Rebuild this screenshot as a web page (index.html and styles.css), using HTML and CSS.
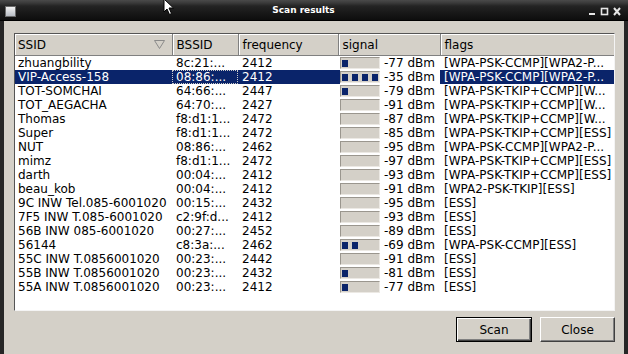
FILE: index.html
```html
<!DOCTYPE html>
<html lang="en">
<head>
    <meta charset="UTF-8">
    <title>Scan results</title>
    <link rel="stylesheet" href="styles.css">
</head>
<body>
    <div class="window">
        <div class="titlebar">
            <div class="win-icon"></div>
            <div class="title">Scan results</div>
            <div class="controls">
                <svg width="34" height="9" viewBox="0 0 34 9">
                    <rect x="1" y="6" width="6" height="2" fill="#e6e6e6"/>
                    <rect x="13.5" y="1.5" width="6" height="6" fill="none" stroke="#e6e6e6" stroke-width="1.6"/>
                    <path d="M26 1 L32 8 M32 1 L26 8" stroke="#e6e6e6" stroke-width="2"/>
                </svg>
            </div>
        </div>

        <div class="client">
            <div class="listbox">
                <table class="scan-table">
                    <colgroup>
                        <col class="c-ssid">
                        <col class="c-bssid">
                        <col class="c-freq">
                        <col class="c-signal">
                        <col class="c-flags">
                    </colgroup>
                    <thead>
                        <tr>
                            <th><div class="sort-head">SSID
                                <svg width="11" height="9" viewBox="0 0 11 9"><path d="M0.5 0.5 H10.5 L5.5 8.5 Z" fill="none" stroke="#8a8a8a"/></svg>
                            </div></th>
                            <th>BSSID</th>
                            <th>frequency</th>
                            <th>signal</th>
                            <th>flags</th>
                        </tr>
                    </thead>
                    <tbody>
                        <tr><td>zhuangbility</td><td>8c:21:...</td><td>2412</td><td class="sig"><span class="bar"><i></i></span>-77 dBm</td><td>[WPA-PSK-CCMP][WPA2-P...</td></tr>
                        <tr class="selected"><td>VIP-Access-158</td><td class="focus">08:86:...</td><td>2412</td><td class="sig"><span class="bar"><i></i><i></i><i></i><i></i><b></b></span>-35 dBm</td><td>[WPA-PSK-CCMP][WPA2-P...</td></tr>
                        <tr><td>TOT-SOMCHAI</td><td>64:66:...</td><td>2447</td><td class="sig"><span class="bar"><i></i></span>-79 dBm</td><td>[WPA-PSK-TKIP+CCMP][W...</td></tr>
                        <tr><td>TOT_AEGACHA</td><td>64:70:...</td><td>2427</td><td class="sig"><span class="bar"></span>-91 dBm</td><td>[WPA-PSK-TKIP+CCMP][W...</td></tr>
                        <tr><td>Thomas</td><td>f8:d1:1...</td><td>2472</td><td class="sig"><span class="bar"></span>-87 dBm</td><td>[WPA-PSK-TKIP+CCMP][W...</td></tr>
                        <tr><td>Super</td><td>f8:d1:1...</td><td>2472</td><td class="sig"><span class="bar"></span>-85 dBm</td><td>[WPA-PSK-TKIP+CCMP][ESS]</td></tr>
                        <tr><td>NUT</td><td>08:86:...</td><td>2462</td><td class="sig"><span class="bar"></span>-95 dBm</td><td>[WPA-PSK-CCMP][WPA2-P...</td></tr>
                        <tr><td>mimz</td><td>f8:d1:1...</td><td>2472</td><td class="sig"><span class="bar"></span>-97 dBm</td><td>[WPA-PSK-TKIP+CCMP][ESS]</td></tr>
                        <tr><td>darth</td><td>00:04:...</td><td>2412</td><td class="sig"><span class="bar"></span>-93 dBm</td><td>[WPA-PSK-TKIP+CCMP][ESS]</td></tr>
                        <tr><td>beau_kob</td><td>00:04:...</td><td>2412</td><td class="sig"><span class="bar"></span>-91 dBm</td><td>[WPA2-PSK-TKIP][ESS]</td></tr>
                        <tr><td>9C INW Tel.085-6001020</td><td>00:15:...</td><td>2432</td><td class="sig"><span class="bar"></span>-95 dBm</td><td>[ESS]</td></tr>
                        <tr><td>7F5 INW T.085-6001020</td><td>c2:9f:d...</td><td>2412</td><td class="sig"><span class="bar"></span>-93 dBm</td><td>[ESS]</td></tr>
                        <tr><td>56B INW 085-6001020</td><td>00:27:...</td><td>2452</td><td class="sig"><span class="bar"></span>-89 dBm</td><td>[ESS]</td></tr>
                        <tr><td>56144</td><td>c8:3a:...</td><td>2462</td><td class="sig"><span class="bar"><i></i><i></i></span>-69 dBm</td><td>[WPA-PSK-CCMP][ESS]</td></tr>
                        <tr><td>55C INW T.0856001020</td><td>00:23:...</td><td>2442</td><td class="sig"><span class="bar"></span>-91 dBm</td><td>[ESS]</td></tr>
                        <tr><td>55B INW T.0856001020</td><td>00:23:...</td><td>2432</td><td class="sig"><span class="bar"><i></i></span>-81 dBm</td><td>[ESS]</td></tr>
                        <tr><td>55A INW T.0856001020</td><td>00:23:...</td><td>2412</td><td class="sig"><span class="bar"><i></i></span>-77 dBm</td><td>[ESS]</td></tr>
                    </tbody>
                </table>
            </div>

            <div class="actions">
                <button class="btn btn-default">Scan</button>
                <button class="btn">Close</button>
            </div>
        </div>

        <!-- mouse pointer -->
        <svg class="cursor" width="12" height="18" viewBox="0 0 12 18">
            <path d="M1 1 L1 14 L4 11 L6.5 16.5 L8.5 15.5 L6 10 L10.5 10 Z" fill="#fff" stroke="#000" stroke-width="1"/>
        </svg>
    </div>
</body>
</html>
```

FILE: styles.css
```css
body {
    margin: 0;
    width: 628px;
    height: 354px;
    overflow: hidden;
    font-family: "DejaVu Sans", sans-serif;
    font-size: 12px;
    color: #000;
    background-color: #1c1c1c;
}
.window {
    position: relative;
    height: 354px;
    display: flex;
    flex-direction: column;
}

/* title bar */
.titlebar {
    height: 21px;
    flex-shrink: 0;
    display: flex;
    align-items: center;
    background: linear-gradient(#4a4a4a 0, #3a3a3a 3px, #242424 6px, #161616 14px, #0c0c0c 21px);
    border-bottom: 1px solid #000;
    box-sizing: border-box;
}
.win-icon {
    width: 9px;
    height: 9px;
    margin: 2px 0 0 5px;
    background: linear-gradient(#f2f2f2, #b8bcc4);
    border: 1px solid #6a6a6a;
}
.title {
    flex: 1;
    text-align: center;
    color: #fff;
    font-weight: bold;
    font-size: 9px;
    padding-left: 3px;
}
.controls {
    width: 40px;
    display: flex;
    align-items: center;
    padding-top: 2px;
}

/* dialog body */
.client {
    flex: 1;
    background-color: #d4d0c8;
    border-left: 4px solid #262626;
    border-right: 4px solid #262626;
    padding: 12px 9px 0 10px;
    display: flex;
    flex-direction: column;
}
.listbox {
    height: 276px;
    background-color: #fff;
    border: 1px solid;
    border-color: #555 #f4f4f4 #f4f4f4 #555;
    overflow: hidden;
}
.scan-table {
    width: 599px;
    border-collapse: collapse;
    table-layout: fixed;
}
.c-ssid { width: 157px; }
.c-bssid { width: 66px; }
.c-freq { width: 100px; }
.c-signal { width: 102px; }
.c-flags { width: 174px; }

.scan-table th {
    height: 21px;
    padding: 0 4px;
    text-align: left;
    font-weight: normal;
    background-color: #d4d0c8;
    border-right: 1px solid #808080;
    border-bottom: 1px solid #808080;
    box-shadow: inset 1px 1px #fff;
    white-space: nowrap;
}
.scan-table th:first-child {
    padding-left: 3px;
}
.sort-head {
    display: flex;
    justify-content: space-between;
    align-items: center;
    padding-right: 3px;
}
.scan-table td {
    height: 14px;
    padding: 0 4px;
    line-height: 14px;
    white-space: nowrap;
    overflow: hidden;
}
.scan-table td:first-child {
    padding-left: 3px;
}
.scan-table td.sig {
    padding-left: 2px;
}

/* signal bar */
.bar {
    display: inline-block;
    width: 40px;
    height: 12px;
    box-sizing: border-box;
    margin-right: 4px;
    vertical-align: top;
    margin-top: 1px;
    padding: 2px 0 0 1px;
    background-color: #d4d0c8;
    border: 1px solid;
    border-color: #9a968e #ece9e4 #ece9e4 #9a968e;
    white-space: nowrap;
    overflow: hidden;
    line-height: 0;
}
.bar i {
    display: inline-block;
    width: 6px;
    height: 7px;
    margin-right: 4px;
    vertical-align: top;
    background-color: #0a246a;
}
.bar b {
    display: inline-block;
    width: 1px;
    height: 7px;
    margin-left: -3px;
    vertical-align: top;
    background-color: #0a246a;
}

/* selected row */
.selected td {
    background-color: #0a246a;
    color: #fff;
}
.selected td.sig {
    background: linear-gradient(90deg, #0a246a 2px, #fff 2px);
    color: #000;
}
.selected td.focus {
    outline: 1px dotted #c8c8c8;
    outline-offset: -1px;
}

/* buttons */
.actions {
    display: flex;
    justify-content: flex-end;
    gap: 8px;
    margin-top: 6px;
}
.btn {
    width: 75px;
    height: 25px;
    font-family: "DejaVu Sans", sans-serif;
    font-size: 12px;
    color: #000;
    background-color: #d4d0c8;
    border: 1px solid;
    border-color: #fff #404040 #404040 #fff;
    box-shadow: inset -1px -1px #808080;
    padding: 0;
}
.btn-default {
    width: 76px;
    border: 1px solid #000;
    box-shadow: inset 1px 1px #fff, inset -1px -1px #404040, inset -2px -2px #808080;
}

.cursor {
    position: absolute;
    left: 163px;
    top: -2px;
}
```
